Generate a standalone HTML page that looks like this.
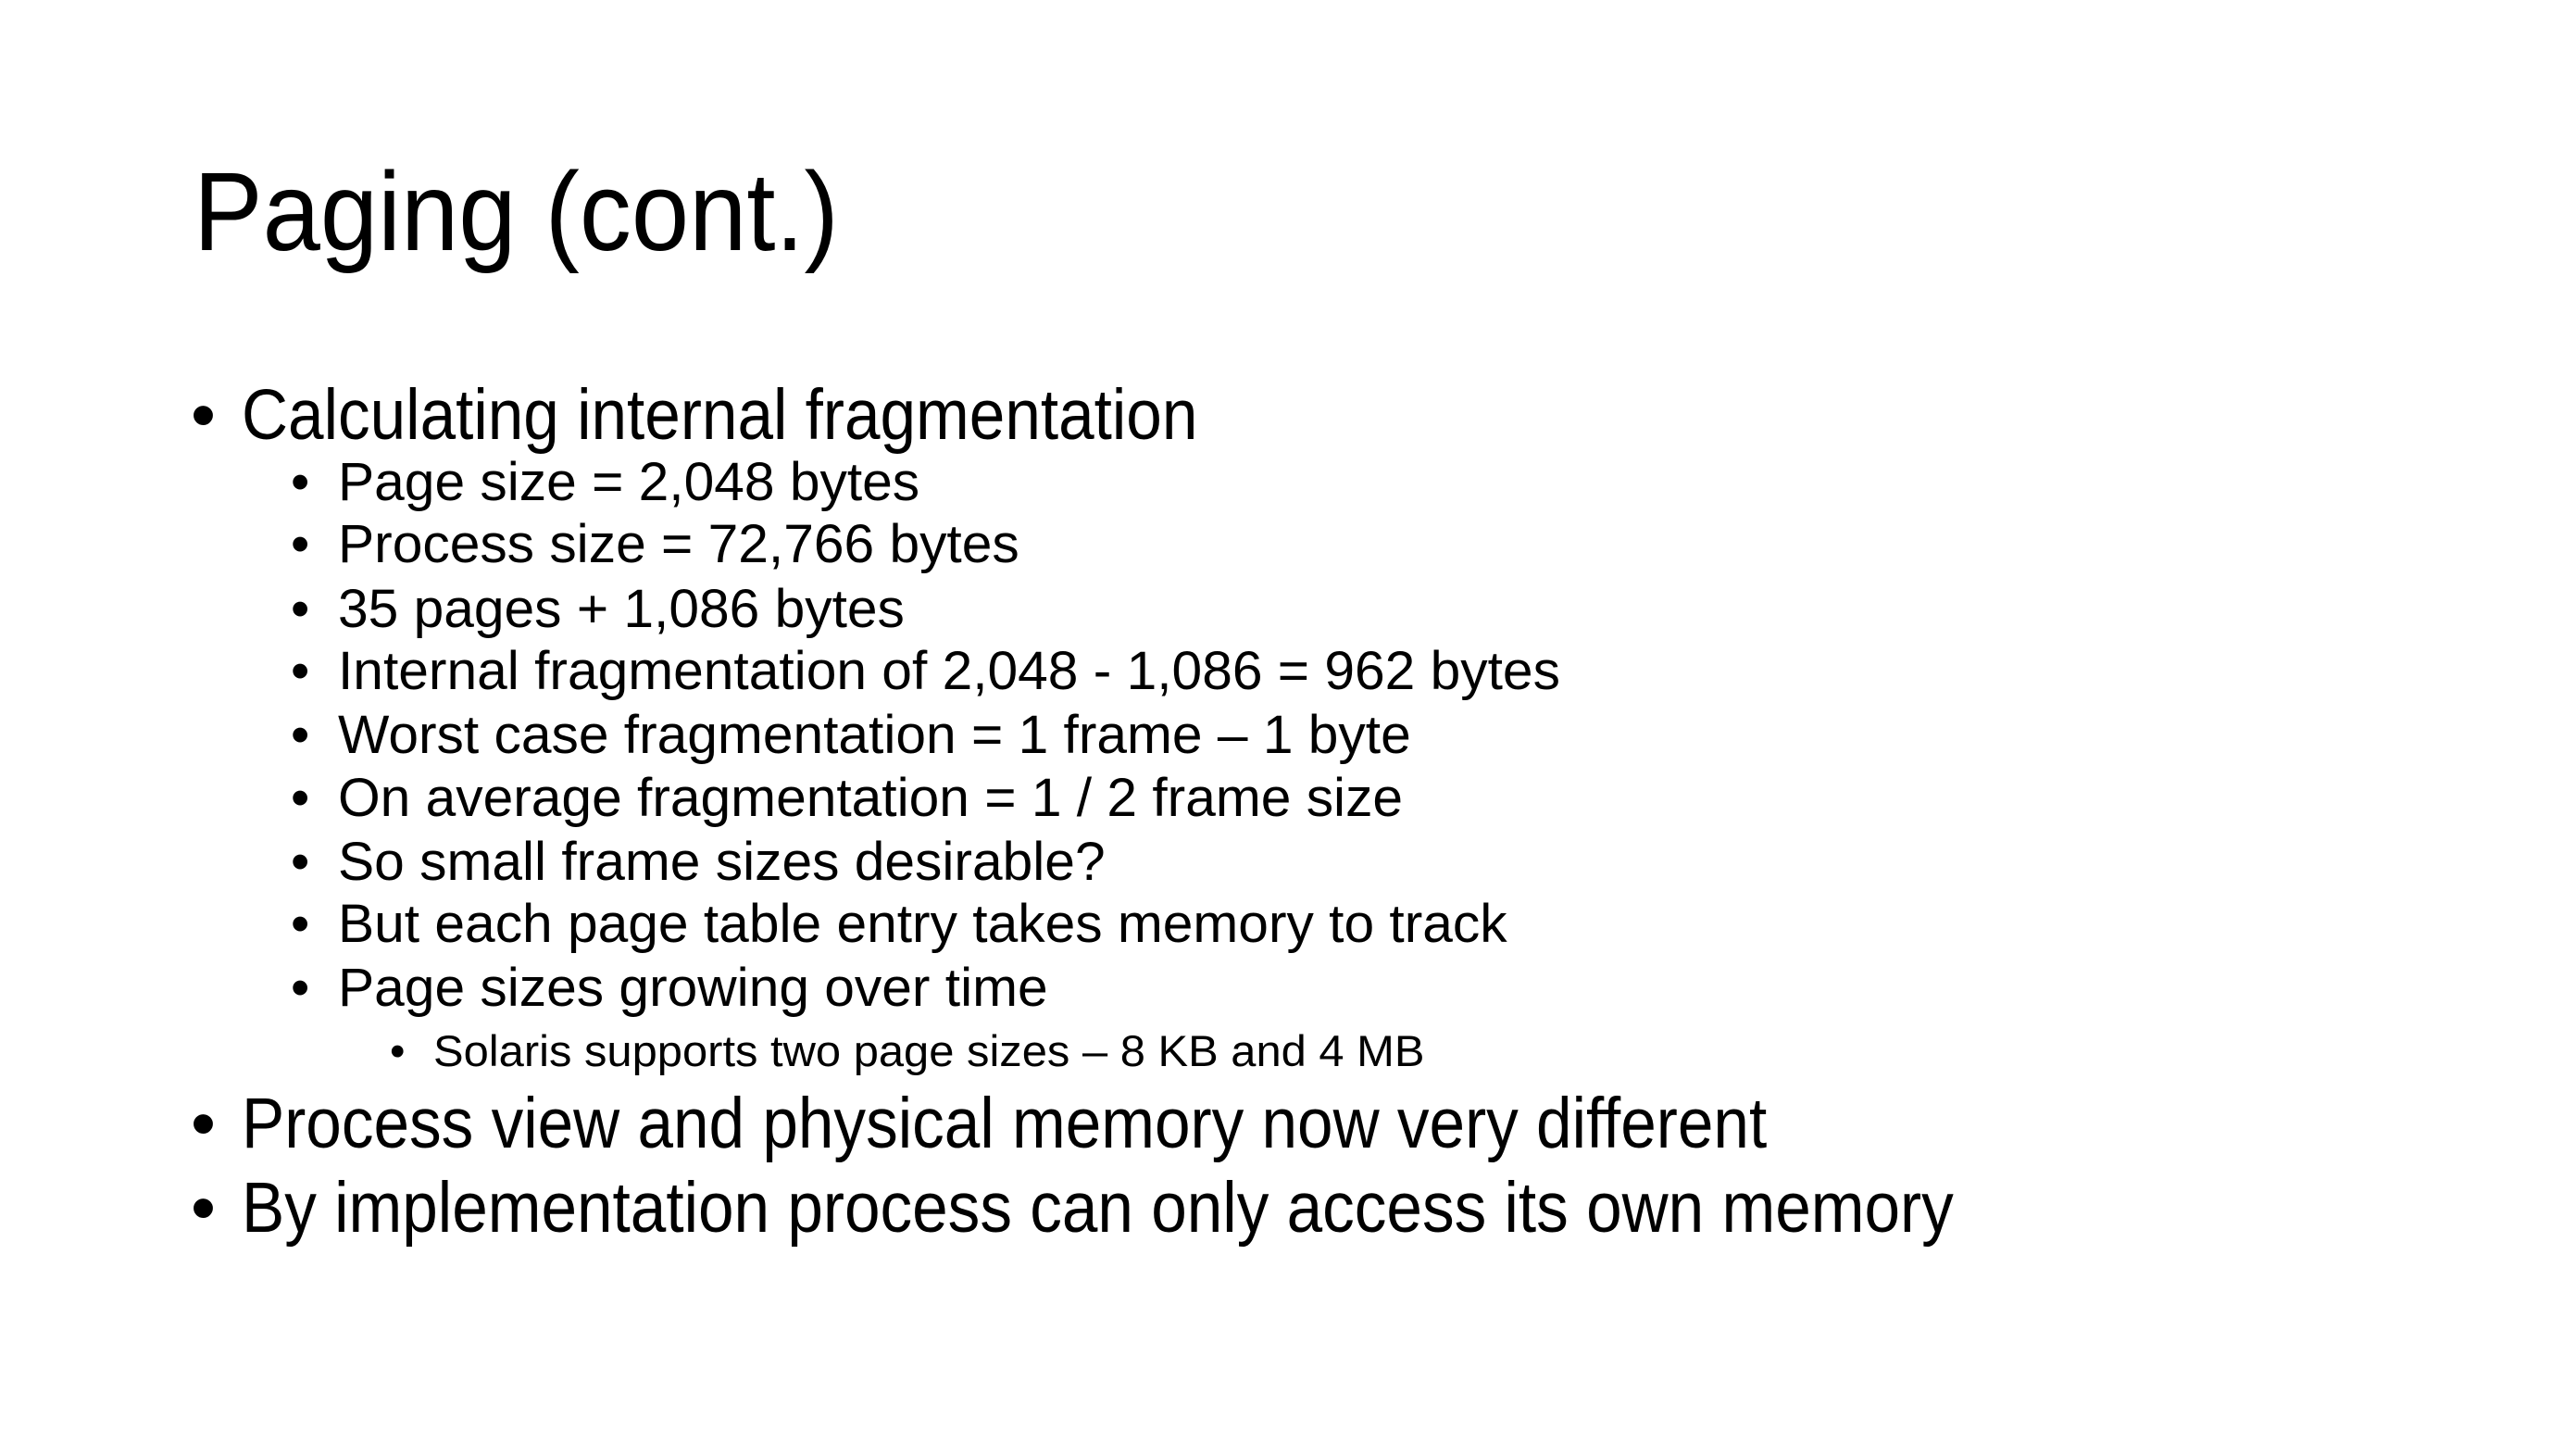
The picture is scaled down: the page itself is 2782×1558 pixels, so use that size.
<!DOCTYPE html>
<html><head><meta charset="utf-8"><style>
html,body{margin:0;padding:0;background:#fff;}
body{width:2782px;height:1558px;position:relative;overflow:hidden;font-family:"Liberation Sans",sans-serif;color:#000;}
.t{position:absolute;white-space:nowrap;transform-origin:left center;}
.title{left:209px;top:168px;font-size:121px;line-height:121px;transform:scaleX(0.925);}
.l1{font-size:77px;line-height:77px;}
.l1.x{transform:scaleX(0.9);}
.l2{font-size:58px;line-height:58px;}
.l2.x{transform:scaleX(1.012);}
.l3{font-size:47px;line-height:47px;}
.l3.x{transform:scaleX(1.04);}
</style></head><body>
<div class="t title">Paging (cont.)</div>

<div class="t l1" style="left:206px;top:410px">•</div><div class="t l1 x" style="left:261px;top:410px">Calculating internal fragmentation</div>

<div class="t l2" style="left:314px;top:492px">•</div><div class="t l2 x" style="left:365px;top:492px">Page size = 2,048 bytes</div>
<div class="t l2" style="left:314px;top:559px">•</div><div class="t l2 x" style="left:365px;top:559px">Process size = 72,766 bytes</div>
<div class="t l2" style="left:314px;top:629px">•</div><div class="t l2 x" style="left:365px;top:629px">35 pages + 1,086 bytes</div>
<div class="t l2" style="left:314px;top:696px">•</div><div class="t l2 x" style="left:365px;top:696px">Internal fragmentation of 2,048 - 1,086 = 962 bytes</div>
<div class="t l2" style="left:314px;top:765px">•</div><div class="t l2 x" style="left:365px;top:765px">Worst case fragmentation = 1 frame – 1 byte</div>
<div class="t l2" style="left:314px;top:833px">•</div><div class="t l2 x" style="left:365px;top:833px">On average fragmentation = 1 / 2 frame size</div>
<div class="t l2" style="left:314px;top:902px">•</div><div class="t l2 x" style="left:365px;top:902px">So small frame sizes desirable?</div>
<div class="t l2" style="left:314px;top:969px">•</div><div class="t l2 x" style="left:365px;top:969px">But each page table entry takes memory to track</div>
<div class="t l2" style="left:314px;top:1038px">•</div><div class="t l2 x" style="left:365px;top:1038px">Page sizes growing over time</div>

<div class="t l3" style="left:421px;top:1111px">•</div><div class="t l3 x" style="left:468px;top:1111px">Solaris supports two page sizes – 8 KB and 4 MB</div>

<div class="t l1" style="left:206px;top:1175px">•</div><div class="t l1 x" style="left:261px;top:1175px">Process view and physical memory now very different</div>
<div class="t l1" style="left:206px;top:1266px">•</div><div class="t l1 x" style="left:261px;top:1266px">By implementation process can only access its own memory</div>
</body></html>
